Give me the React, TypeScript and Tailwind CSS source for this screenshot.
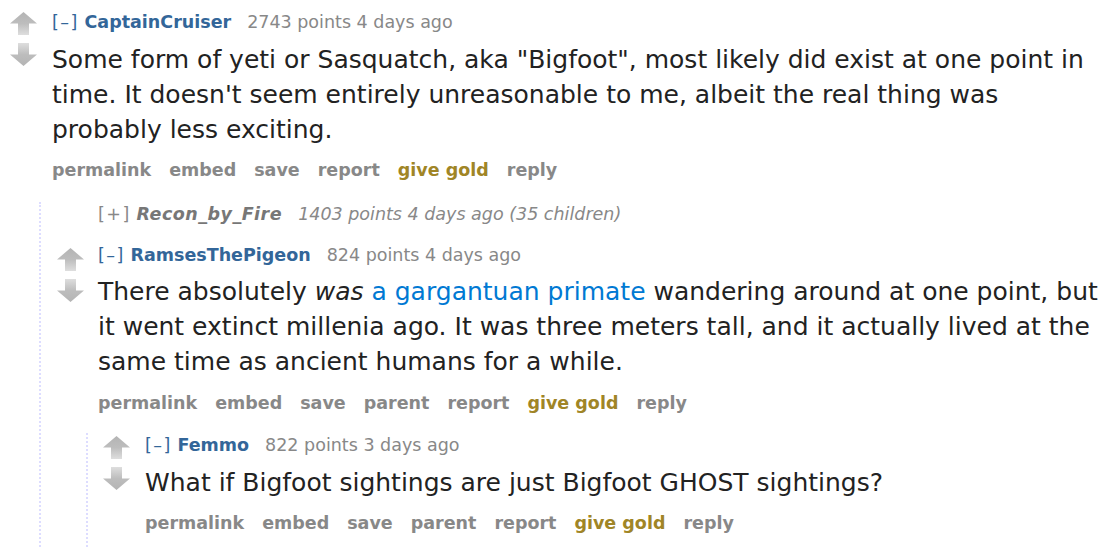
import React, { useId } from "react";

function UpArrow() {
  const id = useId();
  return (
    <svg width="27" height="23" viewBox="0 0 27 23">
      <defs>
        <linearGradient id={id} x1="0" y1="0" x2="0" y2="1">
          <stop offset="0" stopColor="#b4b4b4" />
          <stop offset="0.5" stopColor="#bdbdbd" />
          <stop offset="1" stopColor="#dedede" />
        </linearGradient>
      </defs>
      <path d="M13.5 0 L27 11.5 L19 11.5 L19 23 L8 23 L8 11.5 L0 11.5 Z" fill={`url(#${id})`} />
    </svg>
  );
}

function DownArrow() {
  const id = useId();
  return (
    <svg width="27" height="23" viewBox="0 0 27 23">
      <defs>
        <linearGradient id={id} x1="0" y1="1" x2="0" y2="0">
          <stop offset="0" stopColor="#b4b4b4" />
          <stop offset="0.5" stopColor="#bdbdbd" />
          <stop offset="1" stopColor="#dedede" />
        </linearGradient>
      </defs>
      <path d="M13.5 23 L27 11.5 L19 11.5 L19 0 L8 0 L8 11.5 L0 11.5 Z" fill={`url(#${id})`} />
    </svg>
  );
}

function Arrows() {
  return (
    <div className="flex flex-col w-[27px] gap-[8px]">
      <UpArrow />
      <DownArrow />
    </div>
  );
}

function Tagline({ author, points, age }: { author: string; points: string; age: string }) {
  return (
    <div className="text-[17.5px] leading-[24px] whitespace-nowrap">
      <span className="text-[#369] tracking-[1.5px]">[–]</span>{" "}
      <span className="text-[#369] font-bold">{author}</span>
      <span className="text-[#888] ml-[16px]">{points} points {age}</span>
    </div>
  );
}

function Buttons({ parent }: { parent?: boolean }) {
  const items = parent
    ? ["permalink", "embed", "save", "parent", "report"]
    : ["permalink", "embed", "save", "report"];
  return (
    <div className="flex gap-[18px] text-[17.5px] leading-[24px] font-bold text-[#888] whitespace-nowrap">
      {items.map((t) => (
        <span key={t}>{t}</span>
      ))}
      <span className="text-[#a08526]">give gold</span>
      <span>reply</span>
    </div>
  );
}

export default function App() {
  return (
    <div className="bg-white w-[1099px] h-[547px] overflow-hidden font-['DejaVu_Sans',Verdana,sans-serif]">
      {/* Level 1 */}
      <div className="pt-[10px]">
        <div className="flex">
          <div className="pl-[10px] pt-[2px] w-[52px] shrink-0">
            <Arrows />
          </div>
          <div>
            <Tagline author="CaptainCruiser" points="2743" age="4 days ago" />
            <p className="mt-[8px] text-[25px] leading-[35px] text-[#222]">
              Some form of yeti or Sasquatch, aka "Bigfoot", most likely did exist at one point in time. It doesn't seem entirely unreasonable to me, albeit the real thing was probably less exciting.
            </p>
            <div className="mt-[11px]">
              <Buttons />
            </div>
          </div>
        </div>

        {/* Level 2 children */}
        <div className="ml-[39px] mt-[20px] border-l-2 border-dotted border-[#ddf] pb-[40px]">
          <div className="pl-[57px] text-[17.5px] leading-[24px] whitespace-nowrap italic text-[#888]">
            <span className="not-italic tracking-[1.5px]">[+]</span>{" "}
            <span className="font-bold text-[#777] tracking-[0.5px]">Recon_by_Fire</span>
            <span className="ml-[16px]">1403 points 4 days ago (35 children)</span>
          </div>

          <div className="mt-[17px]">
            <div className="flex pl-[16px]">
              <div className="pt-[5px] w-[41px] shrink-0">
                <Arrows />
              </div>
              <div>
                <Tagline author="RamsesThePigeon" points="824" age="4 days ago" />
                <p className="mt-[7px] text-[25px] leading-[35px] text-[#222]">
                  There absolutely <em>was</em>{" "}
                  <span className="text-[#0079d3]">a gargantuan primate</span> wandering around at one point, but it went extinct millenia ago. It was three meters tall, and it actually lived at the same time as ancient humans for a while.
                </p>
                <div className="mt-[12px]">
                  <Buttons parent />
                </div>
              </div>
            </div>

            {/* Level 3 */}
            <div className="ml-[45px] mt-[18px] border-l-2 border-dotted border-[#ddf] pb-[40px]">
              <div className="flex pl-[15px]">
                <div className="pt-[3px] w-[42px] shrink-0">
                  <Arrows />
                </div>
                <div>
                  <Tagline author="Femmo" points="822" age="3 days ago" />
                  <p className="mt-[8px] text-[25px] leading-[35px] text-[#222]">
                    What if Bigfoot sightings are just Bigfoot GHOST sightings?
                  </p>
                  <div className="mt-[11px]">
                    <Buttons parent />
                  </div>
                </div>
              </div>
            </div>
          </div>
        </div>
      </div>
    </div>
  );
}
